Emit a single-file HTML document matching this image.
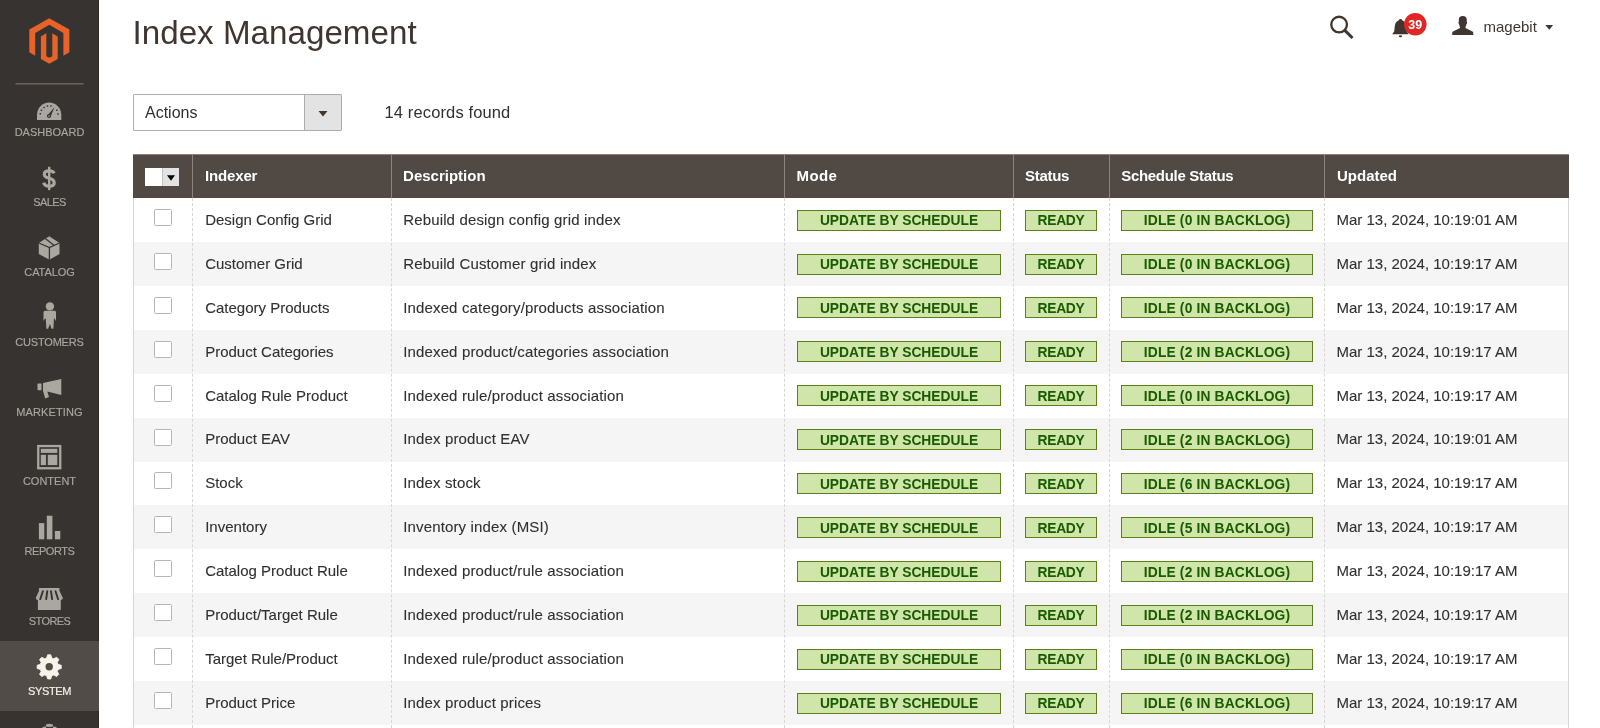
<!DOCTYPE html>
<html><head><meta charset="utf-8">
<style>
*{box-sizing:border-box;margin:0;padding:0}
html,body{width:1600px;height:728px;overflow:hidden;background:#fff;font-family:"Liberation Sans",sans-serif}
body{position:relative;will-change:transform}
.abs{position:absolute}
.t{position:absolute;white-space:nowrap;line-height:1}
#side{position:absolute;left:0;top:0;width:99px;height:728px;background:#373330}
.ml{position:absolute;left:0;width:99px;text-align:center;color:#aaa6a0;font-size:11px;line-height:1;white-space:nowrap;-webkit-text-stroke:0.15px currentColor}
#hdr{position:absolute;left:133px;top:154px;width:1436px;height:44px;background:#514943;border-top:1px solid #8a837f}
.hs{position:absolute;width:1px;height:44px;background:#8a837f}
.ht{position:absolute;line-height:44px;color:#fff;font-weight:bold;font-size:15px;white-space:nowrap}
.row{position:absolute;left:133px;width:1436px;height:44px}
.row.alt{background:#f5f5f5}
.cb{position:absolute;left:154px;width:18px;height:17px;border:1px solid #b5b5b5;border-radius:1.5px;background:#fff}
.ct{position:absolute;font-size:15px;color:#303030;-webkit-text-stroke:0.1px #303030;white-space:nowrap;line-height:1}
.bd{position:absolute;height:21px;background:#d0e5a9;border:1px solid #5b8116;color:#185b00;font-weight:bold;font-size:13.8px;text-align:center;line-height:19px;white-space:nowrap}
.vs{position:absolute;width:1px;border-left:1px dashed #d6d6d6}

</style></head><body>
<div id="side"></div>
<div class="abs" style="left:98px;top:0;width:1px;height:641px;background:#2b2622"></div>
<div class="abs" style="left:0;top:641px;width:99px;height:70px;background:#524c48"></div>
<div class="abs" style="left:98px;top:711px;width:1px;height:17px;background:#2b2622"></div>
<svg class="abs" style="left:0;top:0" width="99" height="728" viewBox="0 0 99 728">
<g transform="translate(29.3,17.77) scale(0.966,0.95)" fill="#e8632a"><path d="M41.5 12.4 L20.7 0.5 L0 12.4 V36.4 L6.1 39.9 V15.9 L20.7 7.4 L35.3 15.9 V39.9 L41.5 36.4 Z"/><path d="M23.8 40.4 L20.7 42.2 L17.6 40.4 V16.4 L12 19.6 V43.5 L20.7 48.5 L29.4 43.5 V19.6 L23.8 16.4 Z"/></g>
<rect x="15.5" y="83" width="68" height="1.6" fill="#6b625c"/>
<path d="M37,119.9 V114.75 A12.15,12.15 0 0 1 61.3,114.75 V119.9 Z" fill="#aaa6a0"/>
<path d="M57.27,113.22 h1.5 v1.5 h-1.5 Z M56.11,109.55 h1.5 v1.5 h-1.5 Z M50.25,105.29 h1.5 v1.5 h-1.5 Z M46.70,105.26 h1.5 v1.5 h-1.5 Z M43.30,106.71 h1.5 v1.5 h-1.5 Z M40.69,109.55 h1.5 v1.5 h-1.5 Z M39.55,113.07 h1.5 v1.5 h-1.5 Z" fill="#373330"/>
<path d="M47.6,115.2 L54.6,107.0 L50.6,116.6 Z" fill="#373330"/><circle cx="49" cy="116" r="2.1" fill="#373330"/><circle cx="49" cy="116" r="0.8" fill="#aaa6a0"/>
<polygon points="49.2,236.2 59.5,243 59.5,254 49.4,259.7 38.8,254 38.8,243" fill="#aaa6a0"/>
<polyline points="38.8,243 49.4,247.6 59.5,243" fill="none" stroke="#373330" stroke-width="1.3"/>
<line x1="49.4" y1="247.6" x2="49.4" y2="260" stroke="#373330" stroke-width="1.3"/>
<line x1="45.3" y1="238.6" x2="54.2" y2="245.4" stroke="#373330" stroke-width="1.3"/>
<circle cx="49.9" cy="306.4" r="4.2" fill="#aaa6a0"/>
<path d="M45,310.8 L54.6,310.8 Q56,310.8 56,312.3 L56,320.9 L54.4,318.2 L53.9,319 L53.4,328.8 L51.6,328.8 L49.9,323.9 L48.1,328.8 L46.4,328.8 L45.8,319 L45.2,318.2 L43.5,320.9 L43.5,312.3 Q43.5,310.8 45,310.8 Z" fill="#aaa6a0"/>
<path d="M38.3,383.4 H41.5 V390.2 H38.3 Q37.5,390.2 37.5,389.4 V384.2 Q37.5,383.4 38.3,383.4 Z" fill="#aaa6a0"/>
<path d="M43,383 L61.3,379 L61.3,395 L47.3,391.5 L49,397.1 L45.2,398.6 L43,391.1 Z" fill="#aaa6a0"/>
<rect x="38.25" y="446.05" width="22" height="22.2" fill="none" stroke="#aaa6a0" stroke-width="2.3"/>
<rect x="40.8" y="448.8" width="16.5" height="4.1" fill="#aaa6a0"/><rect x="40.8" y="454.8" width="5.15" height="10.3" fill="#aaa6a0"/><rect x="47.8" y="454.8" width="9.5" height="10.3" fill="#aaa6a0"/>
<rect x="38.9" y="523.1" width="5.4" height="16.2" fill="#aaa6a0"/><rect x="46.8" y="515.7" width="5.6" height="23.6" fill="#aaa6a0"/><rect x="54.9" y="531" width="5.4" height="8.3" fill="#aaa6a0"/>
<g transform="translate(34,584)">
<rect x="4.9" y="4.1" width="20.6" height="2.3" rx="0.6" fill="#aaa6a0"/>
<path d="M5.4,6 L25,6 L28.8,13.8 Q29,15.9 27,15.9 L3.6,15.9 Q1.6,15.9 1.85,13.8 Z" fill="#aaa6a0"/>
<g stroke="#373330" stroke-linecap="round"><path d="M8.9,7.2 L6.2,15.2" stroke-width="1.9"/><path d="M13.3,7.2 L12.2,15.2" stroke-width="1.9"/><path d="M17,7.2 L18.1,15.2" stroke-width="1.9"/><path d="M21.5,7.2 L24.1,15.2" stroke-width="1.9"/></g>
<rect x="3.9" y="16" width="22.9" height="10" fill="#aaa6a0"/>
</g>
<path d="M46.64,657.96 L47.61,654.80 L50.79,654.80 L51.76,657.96 L53.71,658.77 L56.63,657.22 L58.88,659.47 L57.33,662.39 L58.14,664.34 L61.30,665.31 L61.30,668.49 L58.14,669.46 L57.33,671.41 L58.88,674.33 L56.63,676.58 L53.71,675.03 L51.76,675.84 L50.79,679.00 L47.61,679.00 L46.64,675.84 L44.69,675.03 L41.77,676.58 L39.52,674.33 L41.07,671.41 L40.26,669.46 L37.10,668.49 L37.10,665.31 L40.26,664.34 L41.07,662.39 L39.52,659.47 L41.77,657.22 L44.69,658.77 Z" fill="#f7f3eb" stroke="#f7f3eb" stroke-width="0.8" stroke-linejoin="round"/><circle cx="49.2" cy="666.8" r="3.7" fill="#524c48"/>
<path d="M42,728 Q42.5,726.6 45,726.4 L54,726.4 Q56.5,726.6 57,728 Z" fill="#aaa6a0"/><rect x="46" y="726.6" width="7" height="1.4" fill="#373330"/><ellipse cx="49.4" cy="725.3" rx="3.6" ry="1.5" fill="#aaa6a0"/>
</svg>
<svg class="abs" style="left:0;top:160px" width="99" height="40" viewBox="0 160 99 40"><path d="M54,173.4 C53.5,171.6 51.6,170.9 49.1,170.9 C46.2,170.9 44.3,172.3 44.3,174.4 C44.3,176.8 46.6,177.6 49.3,178.3 C52.3,179.1 54.2,180.3 54.2,182.8 C54.2,185 52.2,186.3 49.2,186.3 C46.2,186.3 44.3,185.2 43.7,182.7" fill="none" stroke="#aaa6a0" stroke-width="3.2"/><rect x="48" y="166.8" width="2.4" height="23.3" fill="#aaa6a0"/></svg>
<div class="ml" style="top:127.39px;letter-spacing:0px;color:#aaa6a0">DASHBOARD</div>
<div class="ml" style="top:197.20px;letter-spacing:-0.6px;color:#aaa6a0">SALES</div>
<div class="ml" style="top:267.01px;letter-spacing:-0.08px;color:#aaa6a0">CATALOG</div>
<div class="ml" style="top:336.82px;letter-spacing:-0.2px;color:#aaa6a0">CUSTOMERS</div>
<div class="ml" style="top:406.63px;letter-spacing:0.1px;color:#aaa6a0">MARKETING</div>
<div class="ml" style="top:476.44px;letter-spacing:0px;color:#aaa6a0">CONTENT</div>
<div class="ml" style="top:546.25px;letter-spacing:-0.45px;color:#aaa6a0">REPORTS</div>
<div class="ml" style="top:616.06px;letter-spacing:-0.55px;color:#aaa6a0">STORES</div>
<div class="ml" style="top:685.87px;letter-spacing:-0.4px;color:#f7f3eb">SYSTEM</div>
<div class="t" style="left:132.5px;top:16.4px;font-size:33.2px;color:#41362f">Index Management</div>
<div class="abs" style="left:133px;top:94px;width:209px;height:37px;border:1px solid #adadad;border-radius:1px;background:#fff"></div>
<div class="abs" style="left:304px;top:95px;width:37px;height:35px;background:#e3e3e3;border-left:1px solid #adadad"></div>
<svg class="abs" style="left:318px;top:109.5px" width="10" height="7" viewBox="0 0 10 7"><path d="M0.5 1 L9.5 1 L5 6.5 Z" fill="#41362f"/></svg>
<div class="t" style="left:145px;top:105px;font-size:16px;color:#303030">Actions</div>
<div class="t" style="left:384.5px;top:104.3px;font-size:16.5px;letter-spacing:0.13px;color:#303030">14 records found</div>
<svg class="abs" style="left:1300px;top:0" width="300" height="60" viewBox="1300 0 300 60">
<circle cx="1339.1" cy="24.6" r="7.85" fill="none" stroke="#41362f" stroke-width="2.3"/>
<line x1="1344.6" y1="30.1" x2="1352.5" y2="38" stroke="#41362f" stroke-width="3"/>
<path d="M1400.5,18.9 C1401.8,18.9 1402.3,19.8 1402.4,20.6 C1405.3,21.6 1406,24 1406.3,27 L1406.8,31.3 C1407,32.5 1408.5,33 1408.5,34.3 L1392.4,34.3 C1392.4,33 1394,32.5 1394.2,31.3 L1394.7,27 C1395,24 1395.7,21.6 1398.6,20.6 C1398.7,19.8 1399.2,18.9 1400.5,18.9 Z" fill="#41362f"/>
<ellipse cx="1400.5" cy="36.2" rx="1.7" ry="1" fill="#41362f"/>
<circle cx="1415.3" cy="24.3" r="11.25" fill="#e22626"/>
<path d="M1462.8,16 C1465.5,16 1466.8,17.5 1466.8,20 L1466.8,22 C1467.3,22.3 1467.2,23.5 1466.5,24 C1466.2,25.5 1465.8,26.3 1465.5,27 L1465.5,28 L1472.5,31.5 C1473.1,31.8 1473.3,32.3 1473.3,33 L1473.3,35 L1452.2,35 L1452.2,33 C1452.2,32.3 1452.4,31.8 1453,31.5 L1460,28 L1460,27 C1459.7,26.3 1459.3,25.5 1459,24 C1458.3,23.5 1458.2,22.3 1458.8,22 L1458.8,20 C1458.8,17.5 1460,16 1462.8,16 Z" fill="#41362f"/>
<path d="M1545.4,24.9 L1553.1,24.9 L1549.25,29.8 Z" fill="#41362f"/>
</svg>
<div class="t" style="left:1404px;width:22.5px;text-align:center;top:18.5px;font-size:12.5px;font-weight:bold;color:#fff">39</div>
<div class="t" style="left:1483.5px;top:19px;font-size:15px;color:#41362f">magebit</div>
<div class="row" style="top:198.00px"></div>
<div class="row alt" style="top:241.90px"></div>
<div class="row" style="top:285.80px"></div>
<div class="row alt" style="top:329.70px"></div>
<div class="row" style="top:373.60px"></div>
<div class="row alt" style="top:417.50px"></div>
<div class="row" style="top:461.40px"></div>
<div class="row alt" style="top:505.30px"></div>
<div class="row" style="top:549.20px"></div>
<div class="row alt" style="top:593.10px"></div>
<div class="row" style="top:637.00px"></div>
<div class="row alt" style="top:680.90px"></div>
<div class="row" style="top:724.80px"></div>
<div class="cb" style="top:209.00px"></div>
<div class="ct" style="left:205.2px;top:211.90px">Design Config Grid</div>
<div class="ct" style="left:403.2px;top:211.90px;letter-spacing:0.15px">Rebuild design config grid index</div>
<div class="bd" style="left:797px;width:204px;top:209.60px;letter-spacing:0px;padding-top:0.8px">UPDATE BY SCHEDULE</div>
<div class="bd" style="left:1025px;width:72px;top:209.60px;letter-spacing:-0.3px;padding-top:0.8px">READY</div>
<div class="bd" style="left:1121px;width:192px;top:209.60px;letter-spacing:0.16px;padding-top:0.8px">IDLE (0 IN BACKLOG)</div>
<div class="ct" style="left:1336.5px;top:211.90px">Mar 13, 2024, 10:19:01 AM</div>
<div class="cb" style="top:252.90px"></div>
<div class="ct" style="left:205.2px;top:255.80px">Customer Grid</div>
<div class="ct" style="left:403.2px;top:255.80px;letter-spacing:0.15px">Rebuild Customer grid index</div>
<div class="bd" style="left:797px;width:204px;top:253.50px;letter-spacing:0px;padding-top:0.8px">UPDATE BY SCHEDULE</div>
<div class="bd" style="left:1025px;width:72px;top:253.50px;letter-spacing:-0.3px;padding-top:0.8px">READY</div>
<div class="bd" style="left:1121px;width:192px;top:253.50px;letter-spacing:0.16px;padding-top:0.8px">IDLE (0 IN BACKLOG)</div>
<div class="ct" style="left:1336.5px;top:255.80px">Mar 13, 2024, 10:19:17 AM</div>
<div class="cb" style="top:296.80px"></div>
<div class="ct" style="left:205.2px;top:299.70px">Category Products</div>
<div class="ct" style="left:403.2px;top:299.70px;letter-spacing:0.15px">Indexed category/products association</div>
<div class="bd" style="left:797px;width:204px;top:297.40px;letter-spacing:0px;padding-top:0.8px">UPDATE BY SCHEDULE</div>
<div class="bd" style="left:1025px;width:72px;top:297.40px;letter-spacing:-0.3px;padding-top:0.8px">READY</div>
<div class="bd" style="left:1121px;width:192px;top:297.40px;letter-spacing:0.16px;padding-top:0.8px">IDLE (0 IN BACKLOG)</div>
<div class="ct" style="left:1336.5px;top:299.70px">Mar 13, 2024, 10:19:17 AM</div>
<div class="cb" style="top:340.70px"></div>
<div class="ct" style="left:205.2px;top:343.60px">Product Categories</div>
<div class="ct" style="left:403.2px;top:343.60px;letter-spacing:0.15px">Indexed product/categories association</div>
<div class="bd" style="left:797px;width:204px;top:341.30px;letter-spacing:0px;padding-top:0.8px">UPDATE BY SCHEDULE</div>
<div class="bd" style="left:1025px;width:72px;top:341.30px;letter-spacing:-0.3px;padding-top:0.8px">READY</div>
<div class="bd" style="left:1121px;width:192px;top:341.30px;letter-spacing:0.16px;padding-top:0.8px">IDLE (2 IN BACKLOG)</div>
<div class="ct" style="left:1336.5px;top:343.60px">Mar 13, 2024, 10:19:17 AM</div>
<div class="cb" style="top:384.60px"></div>
<div class="ct" style="left:205.2px;top:387.50px">Catalog Rule Product</div>
<div class="ct" style="left:403.2px;top:387.50px;letter-spacing:0.15px">Indexed rule/product association</div>
<div class="bd" style="left:797px;width:204px;top:385.20px;letter-spacing:0px;padding-top:0.8px">UPDATE BY SCHEDULE</div>
<div class="bd" style="left:1025px;width:72px;top:385.20px;letter-spacing:-0.3px;padding-top:0.8px">READY</div>
<div class="bd" style="left:1121px;width:192px;top:385.20px;letter-spacing:0.16px;padding-top:0.8px">IDLE (0 IN BACKLOG)</div>
<div class="ct" style="left:1336.5px;top:387.50px">Mar 13, 2024, 10:19:17 AM</div>
<div class="cb" style="top:428.50px"></div>
<div class="ct" style="left:205.2px;top:431.40px">Product EAV</div>
<div class="ct" style="left:403.2px;top:431.40px;letter-spacing:0.15px">Index product EAV</div>
<div class="bd" style="left:797px;width:204px;top:429.10px;letter-spacing:0px;padding-top:0.8px">UPDATE BY SCHEDULE</div>
<div class="bd" style="left:1025px;width:72px;top:429.10px;letter-spacing:-0.3px;padding-top:0.8px">READY</div>
<div class="bd" style="left:1121px;width:192px;top:429.10px;letter-spacing:0.16px;padding-top:0.8px">IDLE (2 IN BACKLOG)</div>
<div class="ct" style="left:1336.5px;top:431.40px">Mar 13, 2024, 10:19:01 AM</div>
<div class="cb" style="top:472.40px"></div>
<div class="ct" style="left:205.2px;top:475.30px">Stock</div>
<div class="ct" style="left:403.2px;top:475.30px;letter-spacing:0.15px">Index stock</div>
<div class="bd" style="left:797px;width:204px;top:473.00px;letter-spacing:0px;padding-top:0.8px">UPDATE BY SCHEDULE</div>
<div class="bd" style="left:1025px;width:72px;top:473.00px;letter-spacing:-0.3px;padding-top:0.8px">READY</div>
<div class="bd" style="left:1121px;width:192px;top:473.00px;letter-spacing:0.16px;padding-top:0.8px">IDLE (6 IN BACKLOG)</div>
<div class="ct" style="left:1336.5px;top:475.30px">Mar 13, 2024, 10:19:17 AM</div>
<div class="cb" style="top:516.30px"></div>
<div class="ct" style="left:205.2px;top:519.20px">Inventory</div>
<div class="ct" style="left:403.2px;top:519.20px;letter-spacing:0.15px">Inventory index (MSI)</div>
<div class="bd" style="left:797px;width:204px;top:516.90px;letter-spacing:0px;padding-top:0.8px">UPDATE BY SCHEDULE</div>
<div class="bd" style="left:1025px;width:72px;top:516.90px;letter-spacing:-0.3px;padding-top:0.8px">READY</div>
<div class="bd" style="left:1121px;width:192px;top:516.90px;letter-spacing:0.16px;padding-top:0.8px">IDLE (5 IN BACKLOG)</div>
<div class="ct" style="left:1336.5px;top:519.20px">Mar 13, 2024, 10:19:17 AM</div>
<div class="cb" style="top:560.20px"></div>
<div class="ct" style="left:205.2px;top:563.10px">Catalog Product Rule</div>
<div class="ct" style="left:403.2px;top:563.10px;letter-spacing:0.15px">Indexed product/rule association</div>
<div class="bd" style="left:797px;width:204px;top:560.80px;letter-spacing:0px;padding-top:0.8px">UPDATE BY SCHEDULE</div>
<div class="bd" style="left:1025px;width:72px;top:560.80px;letter-spacing:-0.3px;padding-top:0.8px">READY</div>
<div class="bd" style="left:1121px;width:192px;top:560.80px;letter-spacing:0.16px;padding-top:0.8px">IDLE (2 IN BACKLOG)</div>
<div class="ct" style="left:1336.5px;top:563.10px">Mar 13, 2024, 10:19:17 AM</div>
<div class="cb" style="top:604.10px"></div>
<div class="ct" style="left:205.2px;top:607.00px">Product/Target Rule</div>
<div class="ct" style="left:403.2px;top:607.00px;letter-spacing:0.15px">Indexed product/rule association</div>
<div class="bd" style="left:797px;width:204px;top:604.70px;letter-spacing:0px;padding-top:0.8px">UPDATE BY SCHEDULE</div>
<div class="bd" style="left:1025px;width:72px;top:604.70px;letter-spacing:-0.3px;padding-top:0.8px">READY</div>
<div class="bd" style="left:1121px;width:192px;top:604.70px;letter-spacing:0.16px;padding-top:0.8px">IDLE (2 IN BACKLOG)</div>
<div class="ct" style="left:1336.5px;top:607.00px">Mar 13, 2024, 10:19:17 AM</div>
<div class="cb" style="top:648.00px"></div>
<div class="ct" style="left:205.2px;top:650.90px">Target Rule/Product</div>
<div class="ct" style="left:403.2px;top:650.90px;letter-spacing:0.15px">Indexed rule/product association</div>
<div class="bd" style="left:797px;width:204px;top:648.60px;letter-spacing:0px;padding-top:0.8px">UPDATE BY SCHEDULE</div>
<div class="bd" style="left:1025px;width:72px;top:648.60px;letter-spacing:-0.3px;padding-top:0.8px">READY</div>
<div class="bd" style="left:1121px;width:192px;top:648.60px;letter-spacing:0.16px;padding-top:0.8px">IDLE (0 IN BACKLOG)</div>
<div class="ct" style="left:1336.5px;top:650.90px">Mar 13, 2024, 10:19:17 AM</div>
<div class="cb" style="top:691.90px"></div>
<div class="ct" style="left:205.2px;top:694.80px">Product Price</div>
<div class="ct" style="left:403.2px;top:694.80px;letter-spacing:0.15px">Index product prices</div>
<div class="bd" style="left:797px;width:204px;top:692.50px;letter-spacing:0px;padding-top:0.8px">UPDATE BY SCHEDULE</div>
<div class="bd" style="left:1025px;width:72px;top:692.50px;letter-spacing:-0.3px;padding-top:0.8px">READY</div>
<div class="bd" style="left:1121px;width:192px;top:692.50px;letter-spacing:0.16px;padding-top:0.8px">IDLE (6 IN BACKLOG)</div>
<div class="ct" style="left:1336.5px;top:694.80px">Mar 13, 2024, 10:19:17 AM</div>
<div class="cb" style="top:735.80px"></div>
<div class="ct" style="left:205.2px;top:738.70px">Catalog Search</div>
<div class="ct" style="left:403.2px;top:738.70px;letter-spacing:0.15px">Rebuild Catalog product fulltext search index</div>
<div class="bd" style="left:797px;width:204px;top:736.40px;letter-spacing:0px;padding-top:0.8px">UPDATE BY SCHEDULE</div>
<div class="bd" style="left:1025px;width:72px;top:736.40px;letter-spacing:-0.3px;padding-top:0.8px">READY</div>
<div class="bd" style="left:1121px;width:192px;top:736.40px;letter-spacing:0.16px;padding-top:0.8px">IDLE (0 IN BACKLOG)</div>
<div class="ct" style="left:1336.5px;top:738.70px">Mar 13, 2024, 10:19:17 AM</div>
<div class="vs" style="left:192.0px;top:198px;height:530px"></div>
<div class="vs" style="left:390.5px;top:198px;height:530px"></div>
<div class="vs" style="left:784.0px;top:198px;height:530px"></div>
<div class="vs" style="left:1012.5px;top:198px;height:530px"></div>
<div class="vs" style="left:1108.5px;top:198px;height:530px"></div>
<div class="vs" style="left:1324.0px;top:198px;height:530px"></div>
<div class="abs" style="left:133px;top:198px;width:1px;height:530px;background:#d6d6d6"></div>
<div class="abs" style="left:1568px;top:198px;width:1px;height:530px;background:#d6d6d6"></div>
<div id="hdr"></div>
<div class="hs" style="left:192.0px;top:154px"></div>
<div class="hs" style="left:390.5px;top:154px"></div>
<div class="hs" style="left:784.0px;top:154px"></div>
<div class="hs" style="left:1012.5px;top:154px"></div>
<div class="hs" style="left:1108.5px;top:154px"></div>
<div class="hs" style="left:1324.0px;top:154px"></div>
<div class="ht" style="left:205px;top:154px;letter-spacing:-0.15px">Indexer</div>
<div class="ht" style="left:403.1px;top:154px;letter-spacing:0px">Description</div>
<div class="ht" style="left:796.5px;top:154px;letter-spacing:0.4px">Mode</div>
<div class="ht" style="left:1025.1px;top:154px;letter-spacing:-0.3px">Status</div>
<div class="ht" style="left:1121.2px;top:154px;letter-spacing:-0.3px">Schedule Status</div>
<div class="ht" style="left:1337px;top:154px;letter-spacing:0px">Updated</div>
<div class="abs" style="left:145px;top:168px;width:34px;height:18px;background:#fff"></div>
<div class="abs" style="left:162px;top:168px;width:17px;height:18px;background:#e3e3e3;border-left:1px solid #c2c2c2"></div>
<svg class="abs" style="left:166px;top:174px" width="10" height="8" viewBox="0 0 10 8"><path d="M1 1.2 L9 1.2 L5 6.8 Z" fill="#000"/></svg>
</body></html>
